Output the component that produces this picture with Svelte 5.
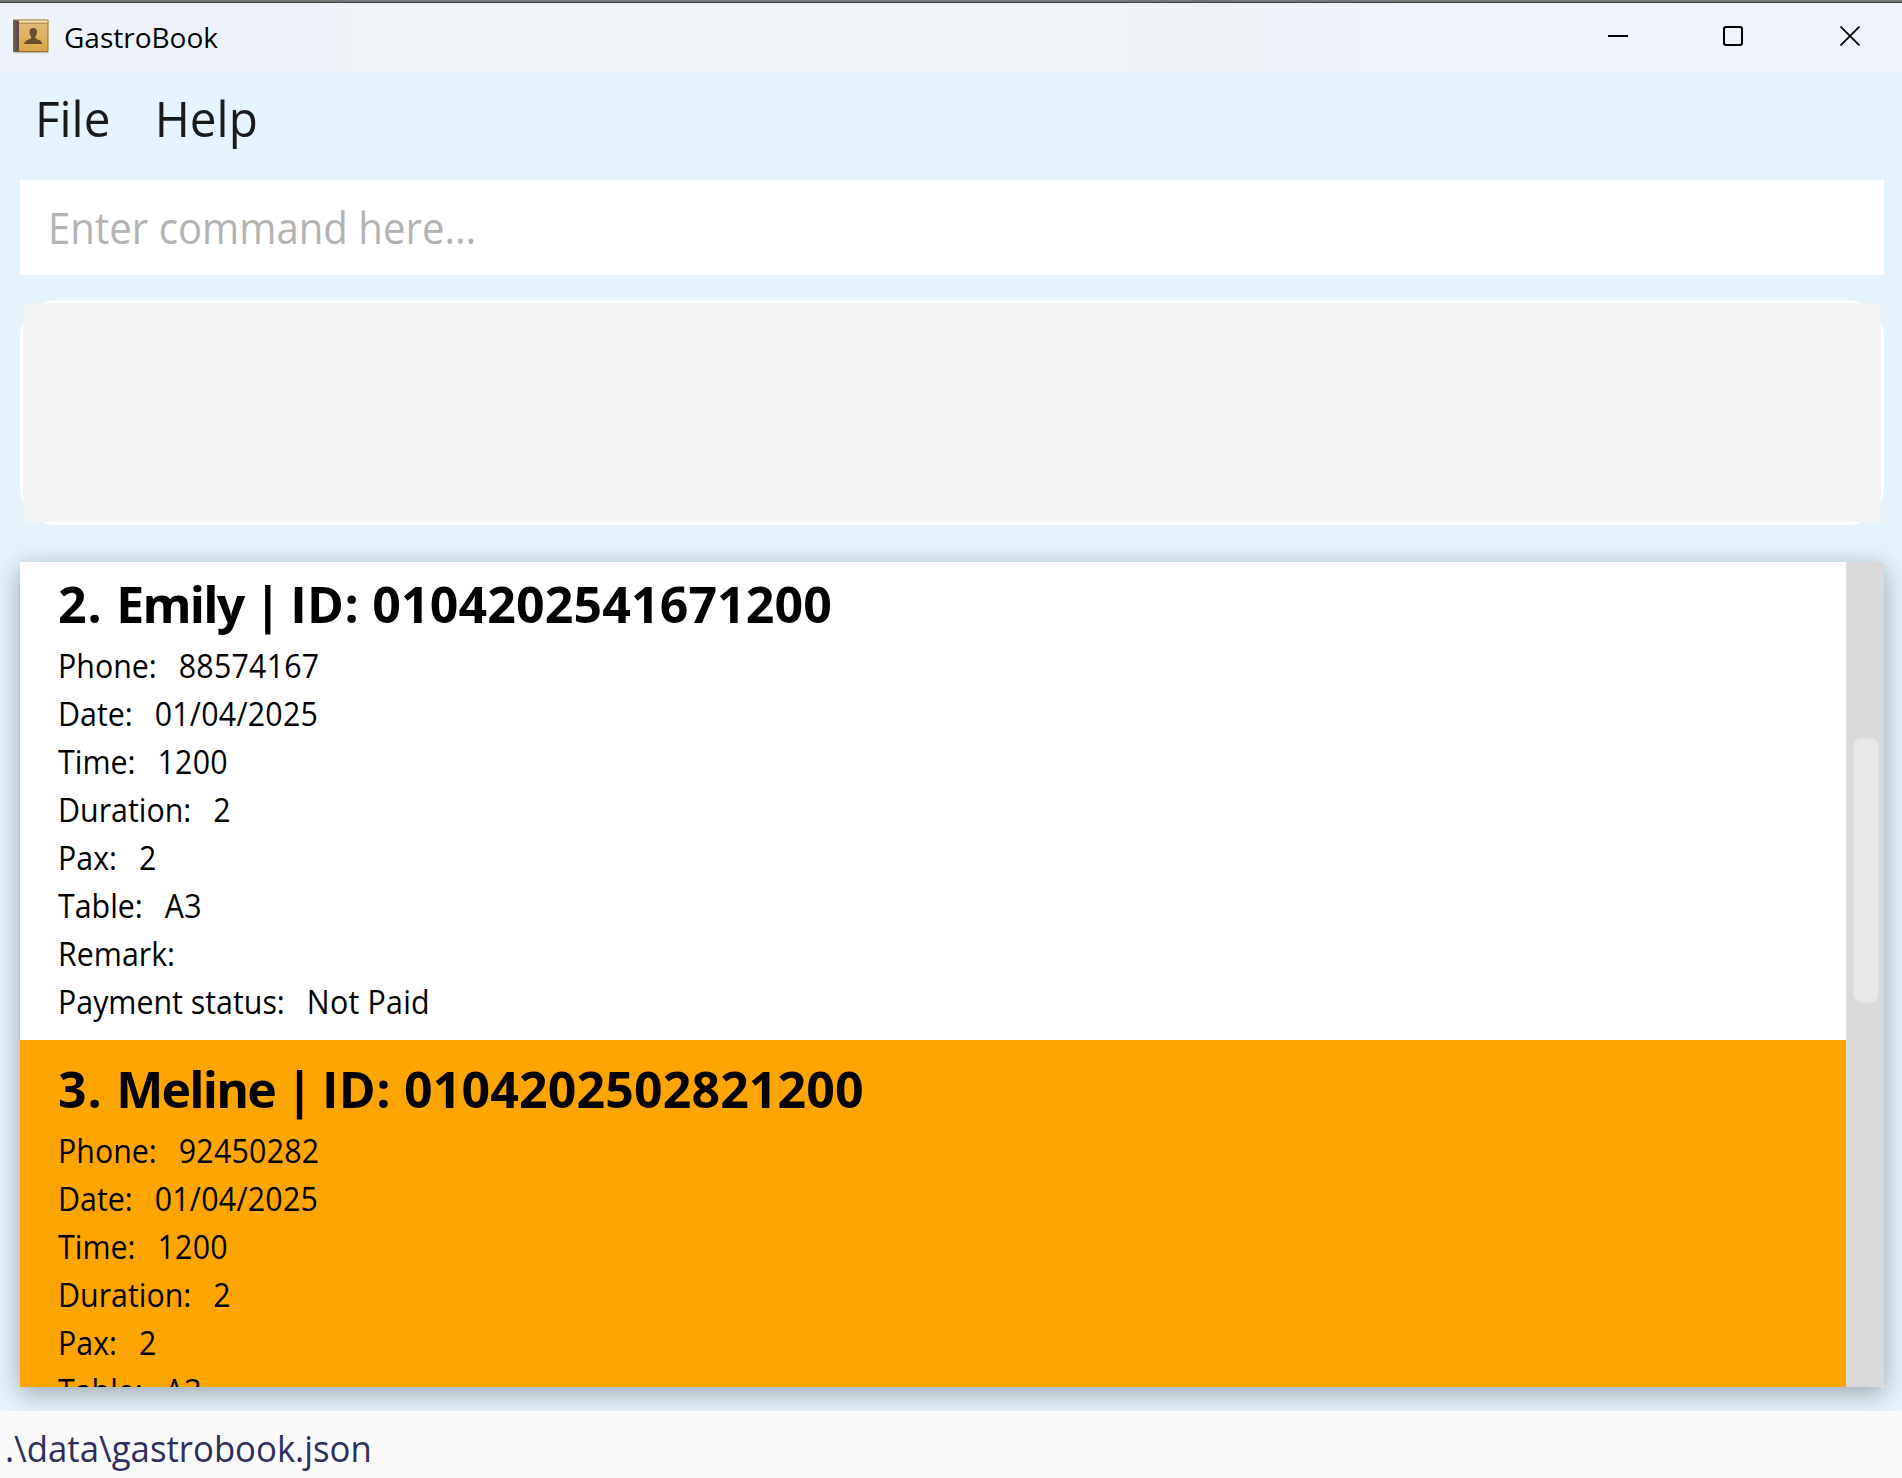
<script>
  const bookings = [
    {
      no: '2. ', name: 'Emily', id: '0104202541671200', highlighted: false,
      rows: [['Phone:', '88574167'], ['Date:', '01/04/2025'], ['Time:', '1200'], ['Duration:', '2'],
        ['Pax:', '2'], ['Table:', 'A3'], ['Remark:', ''], ['Payment status:', 'Not Paid']]
    },
    {
      no: '3. ', name: 'Meline', id: '0104202502821200', highlighted: true,
      rows: [['Phone:', '92450282'], ['Date:', '01/04/2025'], ['Time:', '1200'], ['Duration:', '2'],
        ['Pax:', '2'], ['Table:', 'A3']]
    }
  ];
</script>

<div class="window">
  <header class="titlebar">
    <svg class="logo" width="40" height="40" viewBox="0 0 40 40">
      <defs>
        <linearGradient id="cover" x1="0" y1="0" x2="0" y2="1">
          <stop offset="0" stop-color="#dfbd7c" />
          <stop offset="1" stop-color="#dca645" />
        </linearGradient>
        <linearGradient id="spine" x1="0" y1="0" x2="1" y2="0">
          <stop offset="0" stop-color="#75625c" />
          <stop offset="1" stop-color="#54433f" />
        </linearGradient>
      </defs>
      <rect x="2.5" y="33.5" width="35" height="1.8" rx="0.9" fill="#000" opacity="0.22" />
      <rect x="2" y="1.5" width="35.5" height="32.5" rx="1" fill="#96701f" />
      <rect x="8" y="2.5" width="28.5" height="30.5" fill="url(#cover)" />
      <rect x="5" y="2.7" width="31.5" height="1.2" fill="#f8edcf" />
      <rect x="8" y="5" width="28.5" height="0.8" fill="#b28d48" />
      <rect x="2" y="2.5" width="5.8" height="31" fill="url(#spine)" />
      <path d="M22.2 10c2.7 0 4 1.8 3.8 4.3-.1 2-.8 3.3-1.6 4.2v1.7c.8 1 6.3 1.5 6.9 5.8H13.2c.6-4.3 6.1-4.8 6.9-5.8V18.500c-.8-.9-1.500-2.200-1.600-4.200-.2-2.500 1.100-4.300 3.700-4.300z" fill="#65502f" />
    </svg>
    <span class="app-name">GastroBook</span>
    <div class="controls">
      <svg width="20" height="20" viewBox="0 0 20 20"><path d="M0 10h20" /></svg>
      <svg class="max" width="20" height="20" viewBox="0 0 20 20"><rect x="1" y="1" width="18" height="18" rx="2" /></svg>
      <svg width="20" height="20" viewBox="0 0 20 20"><path d="M.5.5l19 19M19.500.5l-19 19" class="thin" /></svg>
    </div>
  </header>

  <nav class="menu">
    <span>File</span>
    <span>Help</span>
  </nav>

  <div class="command"><div class="placeholder">Enter command here...</div></div>

  <div class="result"><div class="result-area"></div></div>

  <main class="panel">
    <div class="list">
      {#each bookings as b}
        <article class="card" class:highlighted={b.highlighted}>
          <h2><span class="no">{b.no}</span><span class="name">{b.name}</span><span class="sep">{' | '}</span><span class="key">{'ID: '}</span><span class="id">{b.id}</span></h2>
          {#each b.rows as [label, value]}
            <div class="row">
              <span>{label}</span>
              <span class="value">{value}</span>
            </div>
          {/each}
        </article>
      {/each}
    </div>
    <div class="scrollbar"><div class="thumb"></div></div>
  </main>

  <footer><div class="path">.\data\gastrobook.json</div></footer>
</div>

<style>
  :global(body) { margin: 0; }
  .window {
    box-sizing: border-box;
    width: 1902px;
    height: 1478px;
    display: flex;
    flex-direction: column;
    overflow: hidden;
    background: #e4f3fc;
    color: #000;
    font-family: 'Open Sans', 'Noto Sans', sans-serif;
    white-space: nowrap;
  }
  .titlebar {
    box-sizing: border-box;
    height: 72px;
    flex: none;
    display: flex;
    align-items: center;
    padding-left: 11px;
    border-top: 2px solid #757577;
    box-shadow: inset 0 1px #3f3f42;
    background: linear-gradient(90deg, #eef3fb 0, #eef3fb 320px, #eef4f7 350px, #eef4f7 1120px, #eff3f8 1200px, #f0f3fb 1440px);
  }
  .logo { margin-top: 1px; }
  .app-name { margin: -1px 0 0 13px; font-size: 28px; line-height: 40px; }
  .controls { margin-left: auto; margin-right: 42px; margin-top: -2px; display: flex; gap: 96px; }
  .controls svg { fill: none; stroke: #000; stroke-width: 2; display: block; }
  .controls .max { margin: 0 1px 0 -1px; }
  .controls .thin { stroke-width: 1.7; }
  .menu {
    height: 108px;
    flex: none;
    display: flex;
    gap: 46.5px;
    padding-left: 35px;
    font-size: 50px;
    line-height: 93px;
    color: #1a1a1a;
    transform: scaleX(0.953);
    transform-origin: 35px 0;
  }
  .command {
    box-sizing: border-box;
    height: 95px;
    flex: none;
    margin: 0 18px 25px 20px;
    padding-left: 28px;
    background: #fff;
    color: #b2b2b2;
    font-size: 43px;
    line-height: 95px;
  }
  .placeholder { transform: scaleX(0.934); transform-origin: 0 0; }
  .result {
    box-sizing: border-box;
    height: 225px;
    flex: none;
    margin: 0 18px 37px 20px;
    padding: 3px;
    border-radius: 36px;
    background: #fff;
  }
  .result-area { height: 100%; background: #f4f4f4; }
  .panel {
    height: 825px;
    flex: none;
    margin: 0 18px 24px 20px;
    display: flex;
    box-shadow: 0 6px 24px rgba(0, 0, 0, 0.32);
  }
  .list { flex: 1; overflow: hidden; background: #fff; }
  .card { box-sizing: border-box; height: 485px; padding: 13px 0 0 38px; }
  .card:first-child { margin-top: -7px; }
  .highlighted { background: #ffa500; }
  h2 { margin: 0 0 2px; font-size: 50px; line-height: 72px; font-weight: 700; white-space: pre; }
  .no { letter-spacing: 0.8px; }
  .name { letter-spacing: -1.8px; }
  .sep { letter-spacing: -2.2px; }
  .key { letter-spacing: 0.3px; }
  .id { letter-spacing: 0.15px; }
  .row {
    display: flex;
    gap: 23.5px;
    height: 48px;
    font-size: 32.5px;
    line-height: 48px;
    transform: scaleX(0.934);
    transform-origin: 0 0;
  }
  .value { letter-spacing: 0.25px; }
  .scrollbar { box-sizing: border-box; width: 38px; padding: 176px 5px 0 7px; background: #dadada; border-radius: 0 0 4px 0; }
  .thumb { box-sizing: border-box; height: 265px; border: 1px solid #e1e1e1; border-radius: 8px; background: #e8e8e8; }
  footer {
    position: relative;
    box-sizing: border-box;
    height: 67px;
    flex: none;
    padding-left: 5px;
    background: #fafafa;
    color: #2f2f5d;
    font-size: 36.5px;
    line-height: 75px;
  }
  .path { transform: scaleX(0.951); transform-origin: 0 0; }
</style>
